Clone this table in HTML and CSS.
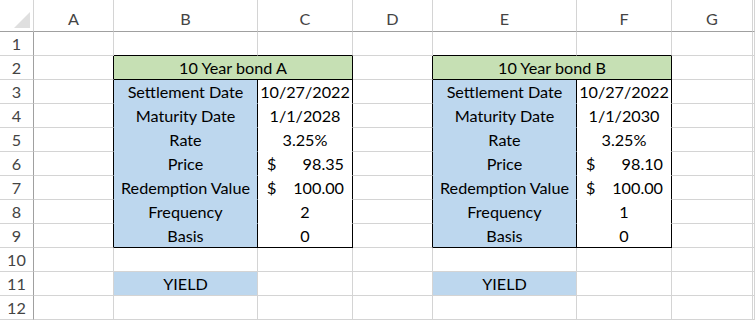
FILE: index.html
```html
<!DOCTYPE html>
<html>
<head>
<meta charset="utf-8">
<link rel="stylesheet" href="styles.css">
</head>
<body>
<div class="sheet">
  <div class="c ch corner"><span class="tri"></span></div>
  <div class="c ch">A</div><div class="c ch">B</div><div class="c ch">C</div><div class="c ch">D</div><div class="c ch">E</div><div class="c ch">F</div><div class="c ch">G</div><div class="c ch"></div>

  <div class="c rh">1</div>
  <div class="c"></div><div class="c tt"></div><div class="c tt"></div><div class="c"></div><div class="c tt"></div><div class="c tt"></div><div class="c"></div><div class="c"></div>

  <div class="c rh">2</div>
  <div class="c tl"></div><div class="c title">10 Year bond A</div><div class="c tl"></div><div class="c title">10 Year bond B</div><div class="c"></div><div class="c"></div>

  <div class="c rh">3</div>
  <div class="c tl"></div><div class="c lbl">Settlement Date</div><div class="c val">10/27/2022</div>
  <div class="c tl"></div><div class="c lbl">Settlement Date</div><div class="c val">10/27/2022</div>
  <div class="c"></div><div class="c"></div>

  <div class="c rh">4</div>
  <div class="c tl"></div><div class="c lbl">Maturity Date</div><div class="c val">1/1/2028</div>
  <div class="c tl"></div><div class="c lbl">Maturity Date</div><div class="c val">1/1/2030</div>
  <div class="c"></div><div class="c"></div>

  <div class="c rh">5</div>
  <div class="c tl"></div><div class="c lbl">Rate</div><div class="c val">3.25%</div>
  <div class="c tl"></div><div class="c lbl">Rate</div><div class="c val">3.25%</div>
  <div class="c"></div><div class="c"></div>

  <div class="c rh">6</div>
  <div class="c tl"></div><div class="c lbl">Price</div><div class="c val acct"><span>$</span><span>98.35</span></div>
  <div class="c tl"></div><div class="c lbl">Price</div><div class="c val acct"><span>$</span><span>98.10</span></div>
  <div class="c"></div><div class="c"></div>

  <div class="c rh">7</div>
  <div class="c tl"></div><div class="c lbl">Redemption Value</div><div class="c val acct"><span>$</span><span>100.00</span></div>
  <div class="c tl"></div><div class="c lbl">Redemption Value</div><div class="c val acct"><span>$</span><span>100.00</span></div>
  <div class="c"></div><div class="c"></div>

  <div class="c rh">8</div>
  <div class="c tl"></div><div class="c lbl">Frequency</div><div class="c val">2</div>
  <div class="c tl"></div><div class="c lbl">Frequency</div><div class="c val">1</div>
  <div class="c"></div><div class="c"></div>

  <div class="c rh">9</div>
  <div class="c tl"></div><div class="c lbl last">Basis</div><div class="c val last">0</div>
  <div class="c tl"></div><div class="c lbl last">Basis</div><div class="c val last">0</div>
  <div class="c"></div><div class="c"></div>

  <div class="c rh">10</div>
  <div class="c"></div><div class="c"></div><div class="c"></div><div class="c"></div><div class="c"></div><div class="c"></div><div class="c"></div><div class="c"></div>

  <div class="c rh">11</div>
  <div class="c"></div><div class="c yield">YIELD</div><div class="c"></div><div class="c"></div><div class="c yield">YIELD</div><div class="c"></div><div class="c"></div><div class="c"></div>

  <div class="c rh">12</div>
  <div class="c"></div><div class="c"></div><div class="c"></div><div class="c"></div><div class="c"></div><div class="c"></div><div class="c"></div><div class="c"></div>
</div>
</body>
</html>
```
FILE: styles.css
```css
html, body {
  margin: 0;
  padding: 0;
  background: #ffffff;
  overflow: hidden;
}

.sheet {
  display: grid;
  grid-template-columns: 34px 80px 144px 95px 80px 144px 95px 81px minmax(0, 1fr);
  grid-template-rows: 32px repeat(12, 24px);
  font-family: Lato, "Liberation Sans", sans-serif;
  font-size: 16.2px;
  color: #000000;
  width: 755px;
}

.c {
  box-sizing: border-box;
  border-right: 1px solid #d4d4d4;
  border-bottom: 1px solid #d4d4d4;
  display: flex;
  align-items: center;
  justify-content: center;
  white-space: nowrap;
  line-height: 23px;
  overflow: hidden;
}

.ch {
  border-bottom-color: #a0a0a0;
  color: #444444;
  align-items: flex-end;
  padding-bottom: 1px;
}

.rh {
  border-right-color: #a0a0a0;
  color: #444444;
}

.corner {
  position: relative;
}

.tri {
  position: absolute;
  left: 14px;
  top: 12px;
  width: 0;
  height: 0;
  border-left: 16px solid transparent;
  border-bottom: 16px solid #dfdfdf;
}

.tl {
  border-right-color: #000000;
}

.tt {
  border-bottom-color: #000000;
}

.title {
  grid-column: span 2;
  background: #c6e0b4;
  border-right-color: #000000;
  border-bottom-color: #000000;
}

.lbl {
  background: #bdd7ee;
  border-right-color: #000000;
  border-bottom-color: #bdd7ee;
}

.val {
  background: #ffffff;
  border-right-color: #000000;
  border-bottom-color: #ffffff;
}

.last {
  border-bottom-color: #000000;
}

.acct {
  justify-content: space-between;
  padding: 0 8px 0 9px;
}

.yield {
  background: #bdd7ee;
}
```
